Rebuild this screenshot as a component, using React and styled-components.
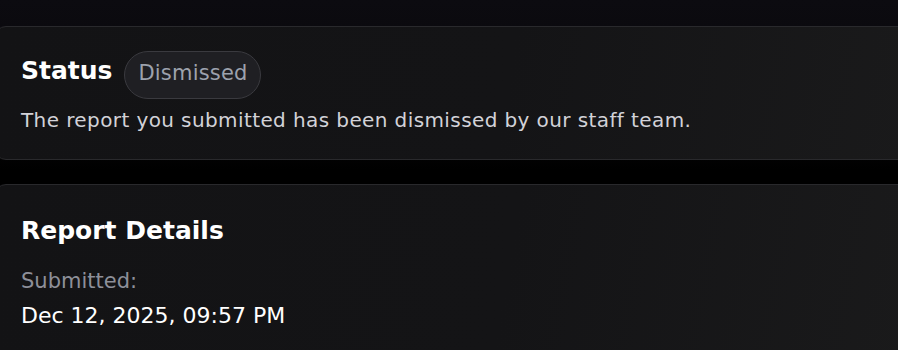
import React from "react";
import styled, { createGlobalStyle } from "styled-components";

const GlobalStyle = createGlobalStyle`
  html, body {
    margin: 0;
    padding: 0;
  }
  body {
    background: linear-gradient(180deg, #0c0b10 0px, #08070a 120px, #000 170px);
    min-height: 350px;
    overflow: hidden;
    font-family: "DejaVu Sans", sans-serif;
    -webkit-font-smoothing: antialiased;
  }
`;

const Page = styled.main`
  display: flex;
  flex-direction: column;
  gap: 24px;
  padding-top: 26px;
  margin-left: -6px;
  width: calc(100% + 30px);
`;

const Card = styled.section`
  background: linear-gradient(100deg, #131315 0%, #141416 55%, #1a1a1b 100%);
  border: 1px solid #29292c;
  border-radius: 12px;
  padding: ${(p) => p.$pad || "24px 26px"};
`;

const HeaderRow = styled.div`
  display: flex;
  align-items: flex-start;
  gap: 12px;
`;

const Title = styled.h2`
  margin: ${(p) => p.$offset || "0"} 0 0;
  font-size: 25px;
  line-height: 30px;
  font-weight: 700;
  color: #ffffff;
`;

const Badge = styled.span`
  display: inline-block;
  box-sizing: border-box;
  height: 48px;
  padding: 8px 12px 0 13px;
  border-radius: 24px;
  background: #1f1f23;
  border: 1px solid #3a3a3f;
  color: #9da2ad;
  font-size: 21px;
  line-height: 26px;
  letter-spacing: 0.2px;
`;

const Description = styled.p`
  margin: 9px 0 0;
  font-size: 20px;
  line-height: 24px;
  letter-spacing: 0.4px;
  color: #d2d2d8;
`;

const Label = styled.div`
  margin-top: 22px;
  font-size: 21px;
  line-height: 26px;
  color: #8d8f99;
`;

const Value = styled.div`
  margin-top: 8px;
  font-size: 22px;
  line-height: 28px;
  color: #ffffff;
`;

export default function App() {
  return (
    <>
      <GlobalStyle />
      <Page>
        <Card $pad="24px 26px 27px">
          <HeaderRow>
            <Title $offset="5px">Status</Title>
            <Badge>Dismissed</Badge>
          </HeaderRow>
          <Description>The report you submitted has been dismissed by our staff team.</Description>
        </Card>
        <Card $pad="31px 26px 40px">
          <Title>Report Details</Title>
          <Label>Submitted:</Label>
          <Value>Dec 12, 2025, 09:57 PM</Value>
        </Card>
      </Page>
    </>
  );
}
